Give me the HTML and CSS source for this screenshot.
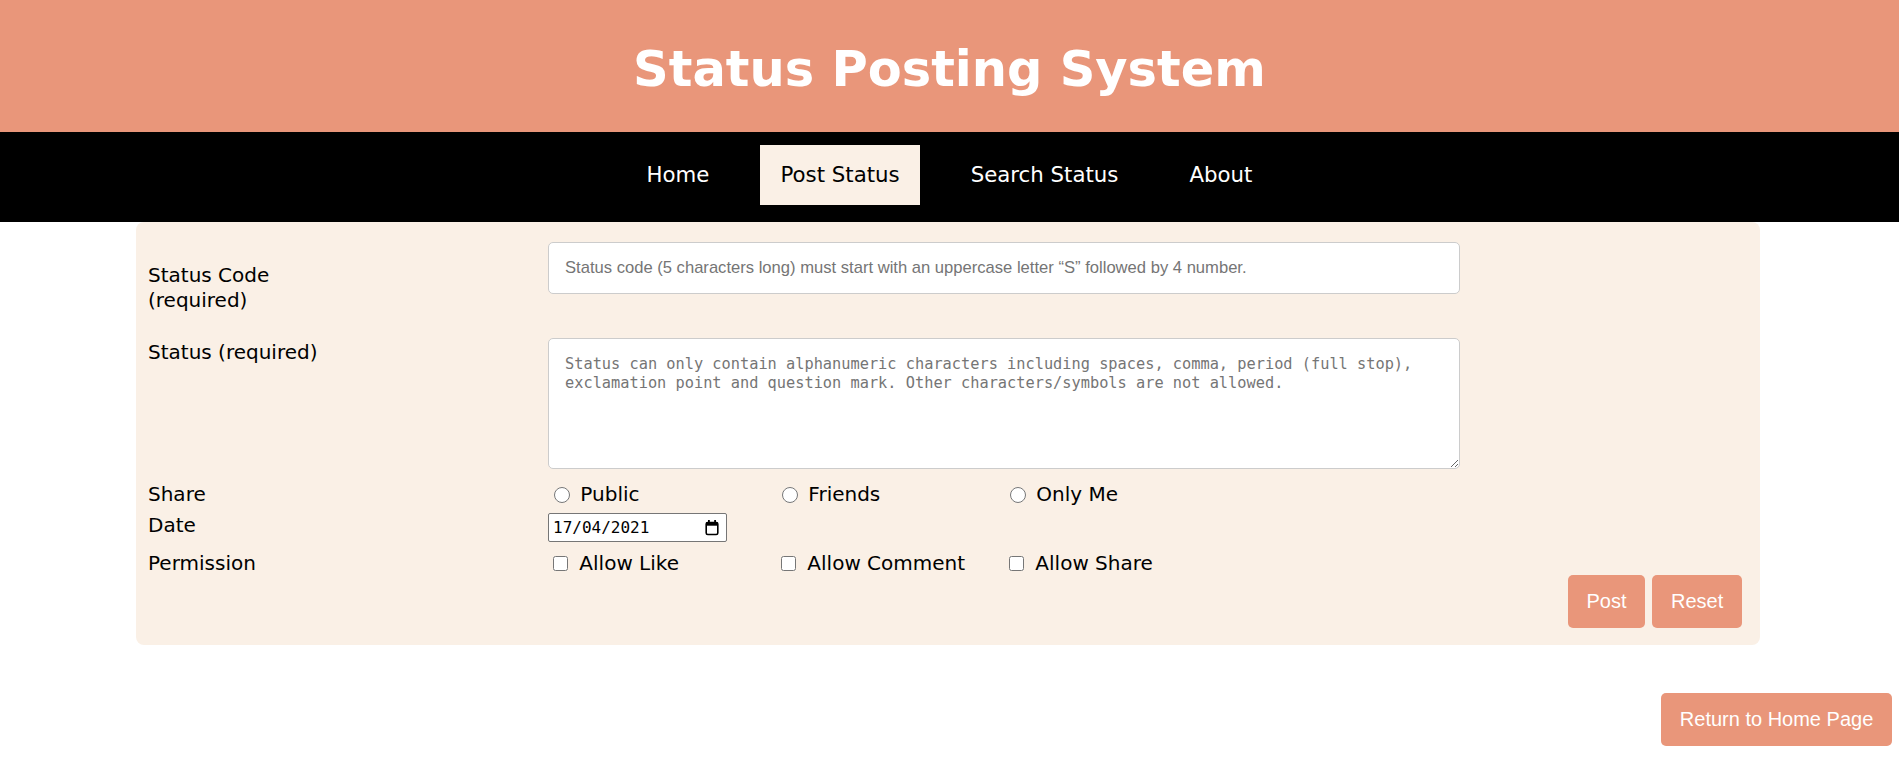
FILE: index.html
```html
<!DOCTYPE html>
<html lang="en">
<head>
<meta charset="utf-8">
<title>Status Posting System</title>
<link rel="stylesheet" href="styles.css">
</head>
<body>
<header class="site-header">
  <h1 class="site-title">Status Posting System</h1>
</header>
<nav class="site-nav">
  <a class="nav-link" href="#">Home</a>
  <a class="nav-link active" href="#">Post Status</a>
  <a class="nav-link" href="#">Search Status</a>
  <a class="nav-link" href="#">About</a>
</nav>
<main>
  <form class="panel">
    <div class="row row-code">
      <div class="label-col"><label class="label label-wrap" for="code">Status Code (required)</label></div>
      <div class="field-col"><input id="code" class="text-input" type="text" placeholder="Status code (5 characters long) must start with an uppercase letter “S” followed by 4 number."></div>
    </div>
    <div class="row row-status">
      <div class="label-col"><label class="label label-wrap" for="status">Status (required)</label></div>
      <div class="field-col"><textarea id="status" class="text-area" placeholder="Status can only contain alphanumeric characters including spaces, comma, period (full stop), exclamation point and question mark. Other characters/symbols are not allowed."></textarea></div>
    </div>
    <div class="row row-share">
      <div class="label-col"><span class="label">Share</span></div>
      <div class="field-col options">
        <label class="option"><input class="radio" type="radio" name="share"> Public</label>
        <label class="option"><input class="radio" type="radio" name="share"> Friends</label>
        <label class="option"><input class="radio" type="radio" name="share"> Only Me</label>
      </div>
    </div>
    <div class="row row-date">
      <div class="label-col"><span class="label">Date</span></div>
      <div class="field-col">
        <div class="date-box">
          <span class="date-text">17/04/2021</span>
          <svg class="cal-icon" width="16" height="17" viewBox="0 0 16 17" aria-hidden="true">
            <rect x="2.2" y="3.5" width="11.6" height="12" rx="1.6" fill="none" stroke="#000" stroke-width="1.6"/>
            <rect x="2.2" y="3.5" width="11.6" height="3.2" fill="#000"/>
            <rect x="4" y="1" width="1.8" height="3" fill="#000"/>
            <rect x="10.2" y="1" width="1.8" height="3" fill="#000"/>
          </svg>
        </div>
      </div>
    </div>
    <div class="row row-perm">
      <div class="label-col"><span class="label">Permission</span></div>
      <div class="field-col options">
        <label class="option"><input class="check" type="checkbox"> Allow Like</label>
        <label class="option"><input class="check" type="checkbox"> Allow Comment</label>
        <label class="option"><input class="check" type="checkbox"> Allow Share</label>
      </div>
    </div>
    <div class="actions">
      <button class="btn" type="button">Post</button>
      <button class="btn" type="reset">Reset</button>
    </div>
  </form>
  <div class="return-row">
    <a class="btn return-btn" href="#">Return to Home Page</a>
  </div>
</main>
</body>
</html>
```
FILE: styles.css
```css
html, body {
  margin: 0;
  padding: 0;
  background: #ffffff;
}

body {
  font-family: "DejaVu Sans", Verdana, sans-serif;
  font-size: 20px;
  color: #000;
}

.site-header {
  background: #e9967a;
  height: 132px;
  box-sizing: border-box;
  padding-top: 40px;
}

.site-title {
  margin: 0;
  text-align: center;
  color: #fff;
  font-family: "DejaVu Sans", Verdana, sans-serif;
  font-weight: bold;
  font-size: 49.5px;
  line-height: 58px;
}

.site-nav {
  background: #000;
  height: 90px;
  box-sizing: border-box;
  padding: 13px 0 17px;
  display: flex;
  justify-content: center;
  gap: 31px;
}

.nav-link {
  display: block;
  height: 60px;
  line-height: 60px;
  padding: 0 20px;
  color: #fff;
  text-decoration: none;
  font-size: 21.3px;
}

.nav-link.active {
  background: #faf0e6;
  color: #000;
}

.panel {
  width: 1624px;
  margin: 0 0 0 136px;
  box-sizing: border-box;
  background: #faf0e6;
  border-radius: 8px;
  padding: 20px 12px 17px;
}

.row {
  display: flex;
  align-items: flex-start;
}

.label-col {
  width: 400px;
  flex: none;
}

.label {
  display: block;
  line-height: 25px;
}

.label-wrap {
  width: 200px;
}

.field-col {
  flex: 1;
}

.row-code .label {
  padding-top: 21px;
}

.row-status {
  margin-top: 25px;
}

.row-status .label {
  padding-top: 2px;
}

.row-share {
  margin-top: 13px;
}

.row-date {
  margin-top: 6px;
}

.row-perm {
  margin-top: 9px;
}

.text-input {
  display: block;
  width: 912px;
  height: 52px;
  box-sizing: border-box;
  margin: 0;
  padding: 0 16px;
  border: 1px solid #cccccc;
  border-radius: 5px;
  background: #fff;
  font-family: "Liberation Sans", Arial, sans-serif;
  font-size: 16.6px;
  color: #000;
}

.text-input::placeholder {
  color: #757575;
}

.text-area {
  display: block;
  width: 912px;
  height: 131px;
  box-sizing: border-box;
  margin: 0;
  padding: 16px 16px;
  border: 1px solid #cccccc;
  border-radius: 5px;
  background: #fff;
  resize: vertical;
  font-family: "DejaVu Sans Mono", "Liberation Mono", monospace;
  font-size: 15.3px;
  line-height: 19px;
  color: #000;
}

.text-area::placeholder {
  color: #757575;
}

.options {
  display: flex;
}

.option {
  width: 228px;
  display: flex;
  align-items: center;
  line-height: 25px;
  white-space: pre;
}

.radio {
  width: 16px;
  height: 16px;
  margin: 0 4px 0 6px;
  flex: none;
}

.check {
  width: 15px;
  height: 15px;
  margin: 0 5px 0 5px;
  flex: none;
}

.date-box {
  width: 179px;
  height: 29px;
  box-sizing: border-box;
  border: 1px solid #767676;
  border-radius: 2px;
  background: #fff;
  display: flex;
  align-items: center;
  padding: 0 6px 0 4px;
}

.date-text {
  flex: 1;
  font-family: "DejaVu Sans Mono", "Liberation Mono", monospace;
  font-size: 16px;
  color: #000;
}

.cal-icon {
  flex: none;
  display: block;
}

.actions {
  display: flex;
  justify-content: flex-end;
  gap: 7px;
  padding-right: 6px;
  margin-top: -1px;
}

.btn {
  display: inline-block;
  height: 53px;
  line-height: 53px;
  padding: 0 18.75px;
  border: none;
  border-radius: 5px;
  background: #e9967a;
  color: #fff;
  font-family: "Liberation Sans", Arial, sans-serif;
  font-size: 20px;
  text-decoration: none;
  cursor: pointer;
}

.return-row {
  display: flex;
  justify-content: flex-end;
  padding-right: 7px;
  margin-top: 48px;
}
```
